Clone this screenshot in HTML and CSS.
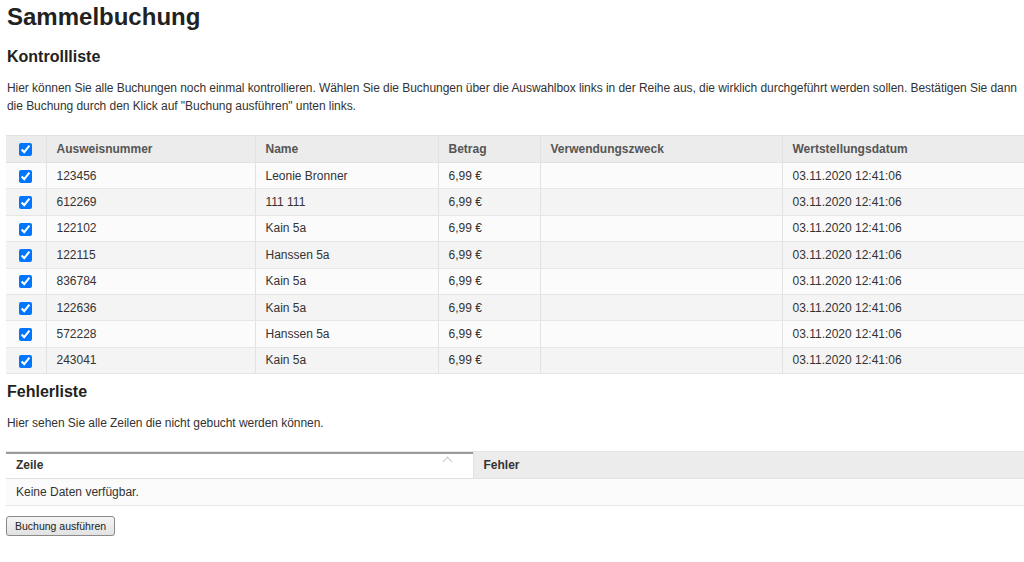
FILE: index.html
```html
<!DOCTYPE html>
<html lang="de">
<head>
    <meta charset="UTF-8">
    <meta name="viewport" content="width=device-width, initial-scale=1.0">
    <title>Sammelbuchung</title>
    <link rel="stylesheet" href="styles.css">
</head>
<body>
    <h1>Sammelbuchung</h1>

    <h2>Kontrollliste</h2>
    <p class="hint">Hier können Sie alle Buchungen noch einmal kontrollieren. Wählen Sie die Buchungen über die Auswahlbox links in der Reihe aus, die wirklich durchgeführt werden sollen. Bestätigen Sie dann die Buchung durch den Klick auf "Buchung ausführen" unten links.</p>

    <div class="grid-wrap">
        <table class="grid">
            <colgroup>
                <col class="c-check">
                <col class="c-id">
                <col class="c-name">
                <col class="c-amount">
                <col class="c-purpose">
                <col class="c-date">
            </colgroup>
            <thead>
                <tr>
                    <th class="check"><input type="checkbox" checked></th>
                    <th>Ausweisnummer</th>
                    <th>Name</th>
                    <th>Betrag</th>
                    <th>Verwendungszweck</th>
                    <th>Wertstellungsdatum</th>
                </tr>
            </thead>
            <tbody id="bookings">
                <!-- wird per Script gefüllt -->
            </tbody>
        </table>
    </div>

    <h2 class="errors-title">Fehlerliste</h2>
    <p class="hint">Hier sehen Sie alle Zeilen die nicht gebucht werden können.</p>

    <div class="grid-wrap errors-wrap">
        <table class="grid errors">
            <colgroup>
                <col class="c-line">
                <col>
            </colgroup>
            <thead>
                <tr>
                    <th class="sorted">Zeile<span class="caret"></span></th>
                    <th class="dark">Fehler</th>
                </tr>
            </thead>
            <tbody>
                <tr>
                    <td colspan="2">Keine Daten verfügbar.</td>
                </tr>
            </tbody>
        </table>
    </div>

    <button class="btn" type="button">Buchung ausführen</button>

    <script>
        // Buchungen, die zur Kontrolle angezeigt werden
        const bookings = [
            { id: '123456', name: 'Leonie Bronner' },
            { id: '612269', name: '111 111' },
            { id: '122102', name: 'Kain 5a' },
            { id: '122115', name: 'Hanssen 5a' },
            { id: '836784', name: 'Kain 5a' },
            { id: '122636', name: 'Kain 5a' },
            { id: '572228', name: 'Hanssen 5a' },
            { id: '243041', name: 'Kain 5a' }
        ];

        const body = document.getElementById('bookings');
        bookings.forEach(b => {
            const tr = document.createElement('tr');
            tr.innerHTML = `
                <td class="check"><input type="checkbox" checked></td>
                <td>${b.id}</td>
                <td>${b.name}</td>
                <td>6,99 €</td>
                <td></td>
                <td>03.11.2020 12:41:06</td>
            `;
            body.appendChild(tr);
        });
    </script>
</body>
</html>
```

FILE: styles.css
```css
html {
    overflow-x: hidden;
}

body {
    margin: 0;
    padding: 3px 0 0 6px;
    font-family: "Liberation Sans", Arial, sans-serif;
    font-size: 12px;
    color: #333;
    background: #fff;
}

h1 {
    margin: 0 0 0 1px;
    font-size: 24px;
    line-height: 28px;
    color: #222;
}

h2 {
    margin: 16px 0 0 1px;
    font-size: 16px;
    line-height: 20px;
    color: #222;
}

.hint {
    margin: 12px -2px 0 1px;
    line-height: 18px;
    letter-spacing: -0.05px;
    color: #333;
}

.grid-wrap {
    margin-top: 20px;
    width: 1030px;
}

.grid {
    width: 100%;
    border-collapse: collapse;
    table-layout: fixed;
    border-top: 1px solid #e2e2e2;
    border-bottom: 1px solid #e2e2e2;
}

.c-check { width: 40px; }
.c-id { width: 209px; }
.c-name { width: 183px; }
.c-amount { width: 102px; }
.c-purpose { width: 242px; }
.c-line { width: 467px; }

.grid th,
.grid td {
    text-align: left;
    padding: 0 10px;
    white-space: nowrap;
    border-left: 1px solid #e2e2e2;
}

.grid th:first-child,
.grid td:first-child {
    border-left: none;
}

.grid th {
    height: 26px;
    background: #ececec;
    color: #555;
    font-weight: bold;
    border-bottom: 1px solid #e2e2e2;
}

.grid td {
    height: 25.4px;
    color: #333;
    border-bottom: 1px solid #e6e6e6;
}

.grid tbody tr:nth-child(odd) td {
    background: #fbfbfb;
}

.grid tbody tr:nth-child(even) td {
    background: #f4f4f4;
}

.grid .check {
    text-align: center;
    padding: 0;
}

.grid input[type="checkbox"] {
    width: 13px;
    height: 13px;
    margin: 0;
    vertical-align: middle;
}

.errors-title {
    margin-top: 8px;
}

.errors-wrap {
    margin-top: 19px;
}

.errors {
    border-top-color: #e6e6e6;
}

.errors th {
    color: #333;
}

.errors th.sorted {
    position: relative;
    background: #fff;
    box-shadow: inset 0 2px 0 #9a9a9a;
}

.errors th.dark {
    background: #ececec;
}

/* kleiner Sortierpfeil oben rechts */
.caret {
    position: absolute;
    top: 6px;
    right: 22px;
    width: 6px;
    height: 6px;
    border-left: 1px solid #c8c8c8;
    border-top: 1px solid #c8c8c8;
    transform: rotate(45deg);
}

.errors td {
    background: #fbfbfb;
}

.btn {
    display: block;
    margin: 10px 0 0 0;
    height: 20px;
    padding: 0 8px;
    font-family: "Liberation Sans", Arial, sans-serif;
    font-size: 10.5px;
    color: #222;
    background: linear-gradient(#f4f4f4, #e2e2e2);
    border: 1px solid #8a8a8a;
    border-radius: 3px;
    box-shadow: 0 1px 1px rgba(0,0,0,0.15);
}
```
